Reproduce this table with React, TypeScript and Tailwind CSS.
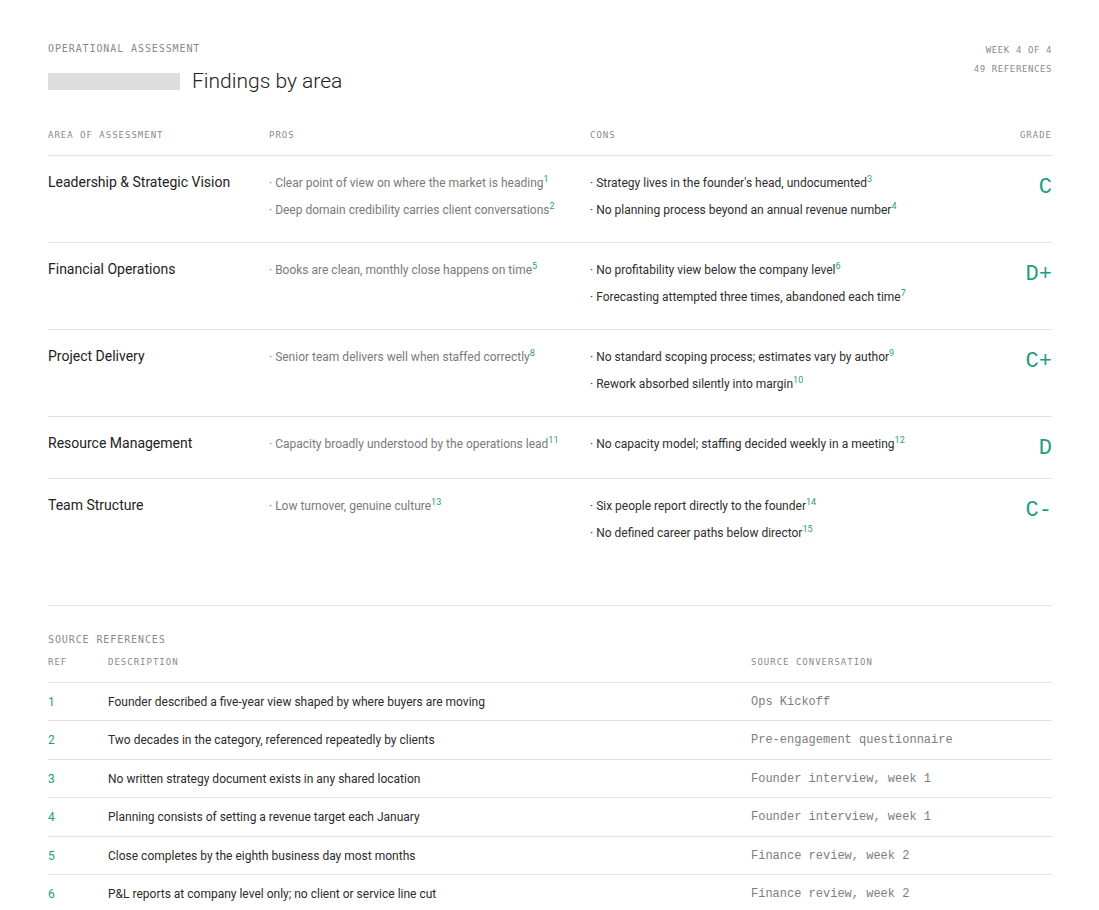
import { Fragment } from 'react'

const SANS = "font-['Roboto','Liberation_Sans',sans-serif]"
const MONO = "font-['Liberation_Mono','DejaVu_Sans_Mono',monospace]"
const LABEL = "font-['DejaVu_Sans_Mono','Liberation_Mono',monospace]"

type Point = { text: string; ref: number }
type Area = { name: string; grade: string; pros: Point[]; cons: Point[] }

const areas: Area[] = [
  {
    name: 'Leadership & Strategic Vision',
    grade: 'C',
    pros: [
      { text: 'Clear point of view on where the market is heading', ref: 1 },
      { text: 'Deep domain credibility carries client conversations', ref: 2 },
    ],
    cons: [
      { text: "Strategy lives in the founder's head, undocumented", ref: 3 },
      { text: 'No planning process beyond an annual revenue number', ref: 4 },
    ],
  },
  {
    name: 'Financial Operations',
    grade: 'D+',
    pros: [{ text: 'Books are clean, monthly close happens on time', ref: 5 }],
    cons: [
      { text: 'No profitability view below the company level', ref: 6 },
      { text: 'Forecasting attempted three times, abandoned each time', ref: 7 },
    ],
  },
  {
    name: 'Project Delivery',
    grade: 'C+',
    pros: [{ text: 'Senior team delivers well when staffed correctly', ref: 8 }],
    cons: [
      { text: 'No standard scoping process; estimates vary by author', ref: 9 },
      { text: 'Rework absorbed silently into margin', ref: 10 },
    ],
  },
  {
    name: 'Resource Management',
    grade: 'D',
    pros: [{ text: 'Capacity broadly understood by the operations lead', ref: 11 }],
    cons: [{ text: 'No capacity model; staffing decided weekly in a meeting', ref: 12 }],
  },
  {
    name: 'Team Structure',
    grade: 'C-',
    pros: [{ text: 'Low turnover, genuine culture', ref: 13 }],
    cons: [
      { text: 'Six people report directly to the founder', ref: 14 },
      { text: 'No defined career paths below director', ref: 15 },
    ],
  },
]

const sources = [
  { ref: 1, description: 'Founder described a five-year view shaped by where buyers are moving', source: 'Ops Kickoff' },
  { ref: 2, description: 'Two decades in the category, referenced repeatedly by clients', source: 'Pre-engagement questionnaire' },
  { ref: 3, description: 'No written strategy document exists in any shared location', source: 'Founder interview, week 1' },
  { ref: 4, description: 'Planning consists of setting a revenue target each January', source: 'Founder interview, week 1' },
  { ref: 5, description: 'Close completes by the eighth business day most months', source: 'Finance review, week 2' },
  { ref: 6, description: 'P&L reports at company level only; no client or service line cut', source: 'Finance review, week 2' },
]

const PointList = ({ items, tone }: { items: Point[]; tone: string }) => (
  <ul className="flex flex-col gap-[9px]">
    {items.map((p) => (
      <li key={p.ref} className={`text-[12px] leading-[18px] ${tone}`}>
        · {p.text}
        {/* ref marker kept inline so it doesn't push the line height */}
        <span className="relative -top-[5px] text-[9px] leading-none text-[#1f9d80]">{p.ref}</span>
      </li>
    ))}
  </ul>
)

export default function App() {
  return (
    <div className={`min-h-screen bg-white pl-12 pr-[47px] pt-[41px] text-[#222] ${SANS}`}>
      {/* page header */}
      <div className="flex items-start justify-between">
        <div>
          <div className={`text-[10px] leading-[15px] tracking-[0.9px] text-[#8a8a8a] ${LABEL}`}>
            OPERATIONAL ASSESSMENT
          </div>
          <div className="mt-[11px] flex items-center gap-3">
            <span className="h-[17px] w-[132px] bg-[#dcdddc]" />
            <h1 className="text-[21px] leading-[28px] font-light text-[#222]">Findings by area</h1>
          </div>
        </div>
        <div className={`text-right text-[9px] leading-[19px] tracking-[0.6px] text-[#8a8a8a] ${LABEL}`}>
          <div>WEEK 4 OF 4</div>
          <div>49 REFERENCES</div>
        </div>
      </div>

      {/* findings table */}
      <div className="mt-8 grid grid-cols-[221px_321px_1fr_auto]">
        {['AREA OF ASSESSMENT', 'PROS', 'CONS', 'GRADE'].map((h, i) => (
          <div
            key={h}
            className={`border-b border-[#e2e2e2] pt-px pb-[13px] text-[9px] leading-[14px] tracking-[1px] text-[#8a8a8a] ${LABEL} ${i === 3 ? 'text-right' : ''}`}
          >
            {h}
          </div>
        ))}
        {areas.map((a, i) => {
          const edge = i < areas.length - 1 ? 'border-b border-[#e2e2e2]' : ''
          return (
            <Fragment key={a.name}>
              <div className={`pt-4 pb-[23px] text-[14px] leading-[20px] text-[#222] ${edge}`}>{a.name}</div>
              <div className={`pt-[18px] pb-[23px] ${edge}`}>
                <PointList items={a.pros} tone="text-[#7a7a7a]" />
              </div>
              <div className={`pt-[18px] pb-[23px] ${edge}`}>
                <PointList items={a.cons} tone="text-[#2e2e2e]" />
              </div>
              <div className={`pt-[18px] pb-[23px] ${edge}`}>
                <div className={`h-5 text-right text-[22px] leading-[28px] text-[#1f9d80] ${MONO}`}>{a.grade}</div>
              </div>
            </Fragment>
          )
        })}
      </div>

      {/* source references */}
      <div className="mt-10 border-t border-[#e2e2e2] pt-[26px]">
        <div className={`text-[10px] leading-[15px] tracking-[0.9px] text-[#8a8a8a] ${LABEL}`}>SOURCE REFERENCES</div>
        <div className="mt-2 grid grid-cols-[60px_643px_1fr]">
          {['REF', 'DESCRIPTION', 'SOURCE CONVERSATION'].map((h) => (
            <div
              key={h}
              className={`border-b border-[#e2e2e2] pb-[13px] text-[9px] leading-[14px] tracking-[1px] text-[#8a8a8a] ${LABEL}`}
            >
              {h}
            </div>
          ))}
          {sources.map((s) => (
            <Fragment key={s.ref}>
              <div className="border-b border-[#e2e2e2] pt-[11px] pb-[9px] text-[12px] leading-[17.4px] text-[#1f9d80]">{s.ref}</div>
              <div className="border-b border-[#e2e2e2] pt-[11px] pb-[9px] text-[12px] leading-[17.4px] text-[#2b2b2b]">
                {s.description}
              </div>
              <div className={`border-b border-[#e2e2e2] pt-[11px] pb-[9px] text-[12px] leading-[17.4px] text-[#7d7d7d] ${MONO}`}>
                {s.source}
              </div>
            </Fragment>
          ))}
        </div>
      </div>
    </div>
  )
}
